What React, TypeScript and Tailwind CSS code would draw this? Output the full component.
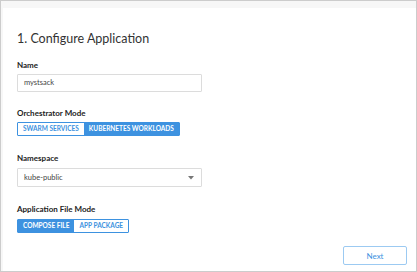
import React from 'react';

const font = { fontFamily: 'Lato, "Open Sans", sans-serif' };

function Label({ children }: { children: React.ReactNode }) {
  return (
    <div className="text-[8px] leading-[12px] font-bold text-[#222]">{children}</div>
  );
}

function Segmented({
  options,
  active,
}: {
  options: string[];
  active: number;
}) {
  return (
    <div className="flex self-start border border-[#3d92e0] rounded-[1px]">
      {options.map((opt, i) => (
        <div
          key={opt}
          className={
            i === active
              ? 'h-[12px] px-[5px] flex items-center bg-[#3d92e0] text-white text-[6.5px] font-bold'
              : 'h-[12px] px-[5px] flex items-center bg-white text-[#3d92e0] text-[6.5px] font-bold'
          }
        >
          {opt}
        </div>
      ))}
    </div>
  );
}

export default function App() {
  return (
    <div
      style={font}
      className="w-[417px] h-[272px] border border-[#cccccc] bg-[#f7f7f7] pt-[7px] pl-[2px] flex"
    >
      <div className="flex-1 bg-white flex flex-col pl-[14px] pr-[9px] pt-[21px] pb-[6px]">
        <h1 className="text-[12.5px] leading-[20px] text-[#333]">1. Configure Application</h1>

        <div className="mt-[10px]">
          <Label>Name</Label>
        </div>
        <div className="mt-[3px] w-[185px] h-[18px] border border-[#dcdcdc] rounded-[1px] flex items-center px-[6px] text-[7.5px] text-[#444]">
          mystsack
        </div>

        <div className="mt-[15px]">
          <Label>Orchestrator Mode</Label>
        </div>
        <div className="mt-[3px] flex">
          <Segmented options={['SWARM SERVICES', 'KUBERNETES WORKLOADS']} active={1} />
        </div>

        <div className="mt-[16px]">
          <Label>Namespace</Label>
        </div>
        <div className="mt-[4px] w-[185px] h-[19px] border border-[#dcdcdc] rounded-[1px] flex items-center justify-between px-[6px] text-[7.5px] text-[#444]">
          <span>kube-public</span>
          <svg width="6" height="4" viewBox="0 0 6 4" className="mr-[1px]">
            <path d="M0 0 L6 0 L3 3.5 Z" fill="#777" />
          </svg>
        </div>

        <div className="mt-[16px]">
          <Label>Application File Mode</Label>
        </div>
        <div className="mt-[4px] flex">
          <Segmented options={['COMPOSE FILE', 'APP PACKAGE']} active={0} />
        </div>

        <div className="mt-auto flex justify-end">
          <button className="w-[64px] h-[19px] border border-[#9ccaf2] rounded-[2px] bg-white text-[8px] text-[#3d92e0] flex items-center justify-center">
            Next
          </button>
        </div>
      </div>
    </div>
  );
}
